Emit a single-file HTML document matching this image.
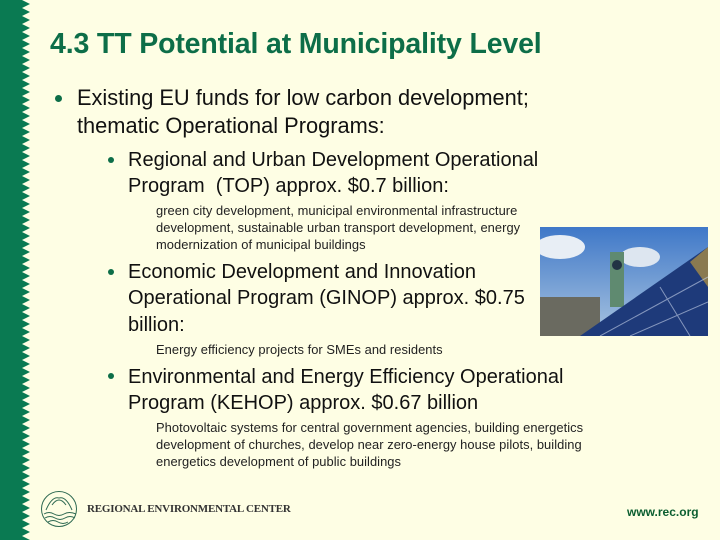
<!DOCTYPE html>
<html><head><style>
body{margin:0;width:720px;height:540px;background:#fefee4;position:relative;overflow:hidden;font-family:"Liberation Sans",sans-serif;color:#111}
.t{position:absolute;white-space:nowrap}
.h{left:50px;top:28px;font-size:28.5px;font-weight:bold;color:#0d6e48;letter-spacing:-0.15px}
.l1{font-size:21.8px;line-height:28px;letter-spacing:0}
.l2{font-size:20px;line-height:26.3px;letter-spacing:0}
.s{font-size:12.9px;line-height:17px;color:#222;letter-spacing:0.05px}
.dot{position:absolute;width:7px;height:7px;border-radius:50%;background:#0d6e48}
.dot2{position:absolute;width:6px;height:6px;border-radius:50%;background:#0d6e48}
</style></head><body>
<svg style="position:absolute;left:0;top:0" width="32" height="540">
<defs><pattern id="z" width="32" height="8" patternUnits="userSpaceOnUse"><polygon points="0,0 22,0 30,4 22,8 0,8" fill="#0a7a52"/></pattern></defs>
<rect width="32" height="540" fill="url(#z)"/>
</svg>
<div class="t h">4.3 TT Potential at Municipality Level</div>
<div class="dot" style="left:55px;top:95px"></div>
<div class="t l1" style="left:77px;top:84px">Existing EU funds for low carbon development;<br>thematic Operational Programs:</div>
<div class="dot2" style="left:108px;top:157px"></div>
<div class="t l2" style="left:128px;top:147px">Regional and Urban Development Operational<br>Program &nbsp;(TOP) approx. $0.7 billion:</div>
<div class="t s" style="left:156px;top:202px">green city development, municipal environmental infrastructure<br>development, sustainable urban transport development, energy<br>modernization of municipal buildings</div>
<div class="dot2" style="left:108px;top:269px"></div>
<div class="t l2" style="left:128px;top:259px">Economic Development and Innovation<br>Operational Program (GINOP) approx. $0.75<br>billion:</div>
<div class="t s" style="left:156px;top:341px">Energy efficiency projects for SMEs and residents</div>
<div class="dot2" style="left:108px;top:373px"></div>
<div class="t l2" style="left:128px;top:364px">Environmental and Energy Efficiency Operational<br>Program (KEHOP) approx. $0.67 billion</div>
<div class="t s" style="left:156px;top:419px">Photovoltaic systems for central government agencies, building energetics<br>development of churches, develop near zero-energy house pilots, building<br>energetics development of public buildings</div>
<svg style="position:absolute;left:540px;top:227px" width="168" height="109">
<defs><linearGradient id="sky" x1="0" y1="0" x2="0" y2="1"><stop offset="0" stop-color="#3f78c8"/><stop offset="1" stop-color="#a9c4e0"/></linearGradient></defs>
<rect width="168" height="109" fill="url(#sky)"/>
<ellipse cx="20" cy="20" rx="25" ry="12" fill="#e8eef5"/>
<ellipse cx="100" cy="30" rx="20" ry="10" fill="#dde6f0"/>
<rect x="0" y="70" width="60" height="39" fill="#6a6a60"/>
<rect x="70" y="25" width="14" height="55" fill="#5f8a70"/>
<circle cx="77" cy="38" r="5" fill="#234"/>
<polygon points="40,109 168,20 168,109" fill="#1e3a7a"/>
<polygon points="150,35 168,20 168,60" fill="#8a7a50"/>
<g stroke="#c8d4ea" stroke-width="1" opacity=".6"><line x1="60" y1="109" x2="168" y2="50"/><line x1="90" y1="109" x2="168" y2="75"/><line x1="120" y1="60" x2="150" y2="109"/></g>
</svg>
<svg style="position:absolute;left:40px;top:490px" width="40" height="38" fill="none" stroke="#2f6a52" stroke-width="1"><circle cx="19" cy="19" r="17.5"/><path d="M6 20 q6-14 13-12 q7-2 13 12 M12 15 q7-10 14 0 M4 24 q5-3 10 0 t10 0 t12 0 M5 28 q5-3 10 0 t10 0 t10 0 M8 32 q5-3 10 0 t10 0"/></svg>
<div class="t" style="left:87px;top:503px;font-family:'Liberation Serif',serif;font-size:11px;font-weight:bold;color:#333;letter-spacing:-0.2px">REGIONAL ENVIRONMENTAL CENTER</div>
<div class="t" style="left:627px;top:505px;font-size:12px;font-weight:bold;color:#0b5e30">www.rec.org</div>
</body></html>
